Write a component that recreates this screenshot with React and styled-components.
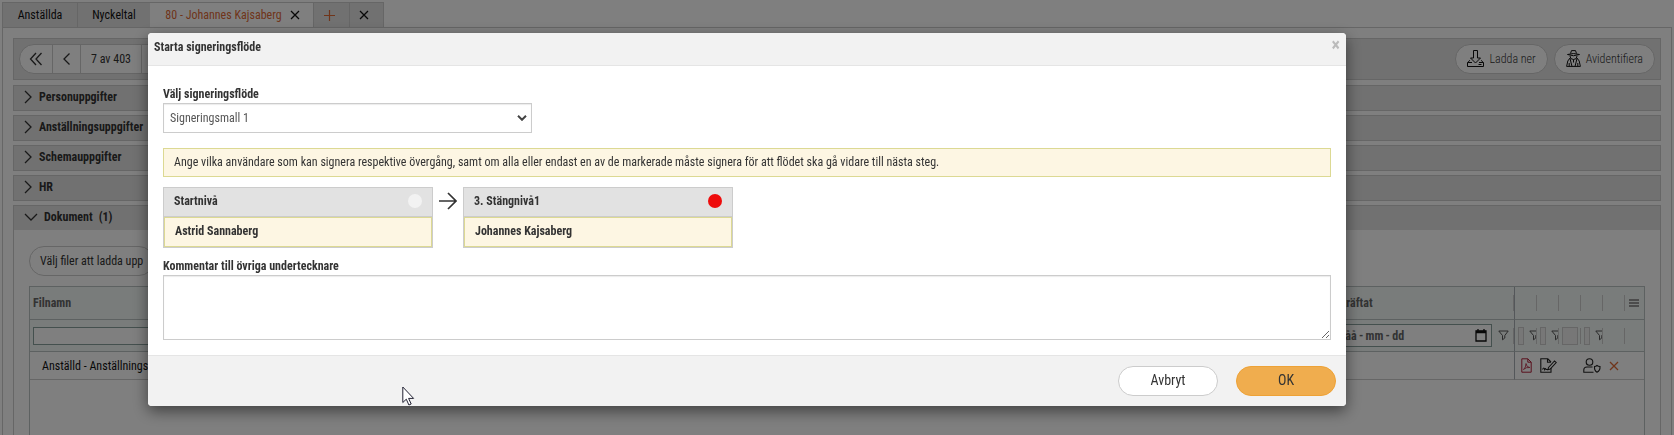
import React, { useState } from "react";
import styled, { createGlobalStyle } from "styled-components";

const colors = {
  text: "#333",
  line: "#ccc",
  bar: "#e3e3e3",
  orange: "#e06a35",
  sand: "#fdf6e3",
  sandLine: "#dcd993",
};

const SECTIONS = ["Personuppgifter", "Anställningsuppgifter", "Schemauppgifter", "HR"];

const LEVELS = [
  { id: 1, title: "Startnivå", user: "Astrid Sannaberg", dot: "#f2f2f2" },
  { id: 2, title: "3. Stängnivå1", user: "Johannes Kajsaberg", dot: "#ee0c0c" },
];

const Chevron = ({ d }) => (
  <svg width="14" height="14" viewBox="0 0 14 14" fill="none" stroke="currentColor" strokeWidth="1.3" aria-hidden="true">
    <path d={d} />
  </svg>
);

const CrossIcon = () => (
  <svg width="10" height="10" viewBox="0 0 10 10" fill="none" stroke="currentColor" strokeWidth="1.3" aria-hidden="true">
    <path d="M1 1l8 8M9 1L1 9" />
  </svg>
);

const PlusIcon = () => (
  <svg width="11" height="11" viewBox="0 0 11 11" fill="none" stroke="currentColor" strokeWidth="1.2" aria-hidden="true">
    <path d="M5.5 0v11M0 5.5h11" />
  </svg>
);

const DownloadIcon = () => (
  <svg width="17" height="17" viewBox="0 0 17 17" fill="none" stroke="#111" aria-hidden="true">
    <path d="M6.5 .5h4V8h3l-5 5-5-5h3z" />
    <path d="M3 10.5H2.5L.5 13v3.500h16V13l-2-2.500H14M.5 12.500H5M12 12.500h4.500M11.500 14.500h3" />
  </svg>
);

const AgentIcon = () => (
  <svg width="15" height="17" viewBox="0 0 15 17" fill="none" stroke="#111" aria-hidden="true">
    <path d="M4.500 3.500L5.500 .6h4l1 2.900M1.500 4.500Q7.500 2.500 13.500 4.500Q7.500 7 1.500 4.500z" />
    <path d="M4 6q0 3.500 3.500 3.500T11 6" />
    <path d="M4 8L1.800 11 .6 16.400h13.800L13.200 11 11 8M4 8.500l2 8M11 8.500l-2 8M7.500 9.500v3M3.200 13v3.400M11.800 13v3.400" />
  </svg>
);

const FunnelIcon = () => (
  <svg width="11" height="11" viewBox="0 0 11 11" fill="none" stroke="#555" strokeWidth="1" aria-hidden="true">
    <path d="M.8 1h9.400L6.800 5.500V8L4.500 9.800V5.500z" />
  </svg>
);

const MenuIcon = () => (
  <svg width="10" height="8" viewBox="0 0 10 8" fill="#999" aria-hidden="true">
    <path d="M0 0h10v2H0zM0 3h10v2H0zM0 6h10v2H0z" />
  </svg>
);

const CalendarIcon = () => (
  <svg width="12" height="13" viewBox="0 0 12 13" fill="none" stroke="#111" aria-hidden="true">
    <path d="M1 2h10v10H1z" strokeWidth="1.300" />
    <path d="M1 3h10" strokeWidth="2.500" />
    <path d="M3 0v2M9 0v2" strokeWidth="1.300" />
  </svg>
);

const PdfIcon = () => (
  <svg width="11" height="15" viewBox="0 0 11 15" fill="none" stroke="#b3203a" aria-hidden="true">
    <path d="M.8 .8h6l3.400 3.400v10H.8zM6.800 .8v3.400h3.400" />
    <path d="M2.500 11.500Q5 9.500 5 5.500Q5.500 9.500 8.800 9.500Q5 9 2.500 11.500z" strokeWidth=".8" />
  </svg>
);

const SignIcon = () => (
  <svg width="17" height="15" viewBox="0 0 17 15" fill="none" stroke="#222" strokeWidth="1.100" aria-hidden="true">
    <path d="M11 10v4.200H.8V.8h7L11 4M7.500 .8v3.500H11" />
    <path d="M8.500 9.500L14.500 3l1.700 1.500-6 6.500-2.200.7zM2.500 11.500q1.500-3 2 0 1-2 1.500 0h2" />
  </svg>
);

const UserIcon = () => (
  <svg width="18" height="15" viewBox="0 0 18 15" fill="none" stroke="#222" strokeWidth="1.100" aria-hidden="true">
    <circle cx="6.500" cy="4" r="3.300" />
    <path d="M10.500 14.200H.8V12q0-3 3.200-3h5.500" />
    <path d="M11.500 8.500q1.500 0 2.500-1 1.200 1 3 1 .3 4.200-3 5.700-2.800-1.500-2.500-5.700z" />
  </svg>
);

const ArrowIcon = () => (
  <svg width="18" height="18" viewBox="0 0 18 18" fill="none" stroke="#333" strokeWidth="1.700" aria-hidden="true">
    <path d="M0 9h17M9 1l8 8-8 8" />
  </svg>
);

const PointerIcon = () => (
  <svg width="13" height="20" viewBox="0 0 13 20" fill="#fff" stroke="#223" aria-hidden="true">
    <path d="M.8 1v15.500l3.500-3.300 2.600 5.800 2.300-1-2.600-5.600h5z" />
  </svg>
);

const App = () => {
  const [comment, setComment] = useState("");

  return (
    <Page>
      <GlobalStyle />
      <Tabs>
        <Tab $width={75}>Anställda</Tab>
        <Tab $width={73}>Nyckeltal</Tab>
        <Tab $width={163} $active>
          80 - Johannes Kajsaberg
          <TabClose><CrossIcon /></TabClose>
        </Tab>
        <Tab $width={36} $accent $icon aria-label="Ny flik"><PlusIcon /></Tab>
        <Tab $width={35} $icon aria-label="Stäng alla"><CrossIcon /></Tab>
      </Tabs>

      <Panel>
        <Toolbar>
          <Pager>
            <PagerButton $width={33} aria-label="Första"><Chevron d="M7 1L1.500 7 7 13M12.500 1L7 7l5.500 6" /></PagerButton>
            <PagerButton $width={28} aria-label="Föregående"><Chevron d="M9.500 1.500L4 7l5.500 5.500" /></PagerButton>
            <PagerText>7 av 403</PagerText>
            <PagerButton $width={28} aria-label="Nästa"><Chevron d="M4.500 1.500L10 7l-5.500 5.500" /></PagerButton>
          </Pager>
          <Actions>
            <PillButton $light><DownloadIcon />Ladda ner</PillButton>
            <PillButton $light><AgentIcon />Avidentifiera</PillButton>
          </Actions>
        </Toolbar>

        {SECTIONS.map((name) => (
          <Section key={name}>
            <SectionHead>
              <Chevron d="M4 1l6 6-6 6" />
              {name}
            </SectionHead>
          </Section>
        ))}
        <Section $open>
          <SectionHead $open>
            <Chevron d="M1 4l6 6 6-6" />
            Dokument <span>(1)</span>
          </SectionHead>
          <SectionBody>
            <PillButton>Välj filer att ladda upp</PillButton>
            <GridBox>
              <Grid>
                <colgroup>
                  <col />
                  <col className="date" />
                  <col className="tool" />
                  <col className="tool" />
                  <col className="tool" />
                  <col className="tool" />
                  <col className="tool" />
                  <col className="menu" />
                </colgroup>
                <thead>
                  <HeadRow>
                    <th>Filnamn</th>
                    <th className="edge"><Tick>Bekräftat</Tick></th>
                    {[1, 2, 3, 4, 5].map((n) => <th key={n}><Tick /></th>)}
                    <th><MenuButton aria-label="Kolumner"><MenuIcon /></MenuButton></th>
                  </HeadRow>
                  <FilterRow>
                    <td><TextFilter aria-label="Filtrera filnamn" /></td>
                    <td className="edge">
                      <Tick>
                        <DateBox>
                          <input aria-label="Filtrera datum" placeholder="åååå&#8201;-&#8201;mm&#8201;-&#8201;dd" />
                          <CalendarIcon />
                        </DateBox>
                        <DateFunnel><FunnelIcon /></DateFunnel>
                      </Tick>
                    </td>
                    <td><Tick><MiniFilter aria-label="Filtrera pdf" /><Clip><FunnelIcon /></Clip></Tick></td>
                    <td><Tick><MiniFilter aria-label="Filtrera signering" /><Clip><FunnelIcon /></Clip></Tick></td>
                    <td><Tick><MiniFilter $wide aria-label="Filtrera status" /></Tick></td>
                    <td><Tick><MiniFilter aria-label="Filtrera användare" /><Clip><FunnelIcon /></Clip></Tick></td>
                    <td><Tick /></td>
                    <td />
                  </FilterRow>
                </thead>
                <tbody>
                  <FileRow>
                    <td>Anställd - Anställningsavtal</td>
                    <td className="edge" />
                    <td><IconButton aria-label="Öppna pdf"><PdfIcon /></IconButton></td>
                    <td><IconButton aria-label="Signera"><SignIcon /></IconButton></td>
                    <td />
                    <td><IconButton aria-label="Behörighet"><UserIcon /></IconButton></td>
                    <td><IconButton $accent aria-label="Ta bort"><CrossIcon /></IconButton></td>
                    <td />
                  </FileRow>
                </tbody>
              </Grid>
            </GridBox>
          </SectionBody>
        </Section>
      </Panel>

      <Overlay>
        <Modal role="dialog" aria-labelledby="modal-title">
          <ModalHead>
            <h2 id="modal-title">Starta signeringsflöde</h2>
            <ModalClose aria-label="Stäng">×</ModalClose>
          </ModalHead>
          <ModalBody>
            <Label htmlFor="flow">Välj signeringsflöde</Label>
            <SelectWrap>
              <Select id="flow">
                <option>Signeringsmall 1</option>
              </Select>
              <svg width="10" height="6" viewBox="0 0 10 6" fill="none" stroke="#444" strokeWidth="2" aria-hidden="true">
                <path d="M1 .8l4 4 4-4" />
              </svg>
            </SelectWrap>
            <Notice>
              Ange vilka användare som kan signera respektive övergång, samt om alla eller endast en av de markerade måste signera för att flödet ska gå vidare till nästa steg.
            </Notice>
            <Levels>
              {LEVELS.map((level, i) => (
                <React.Fragment key={level.id}>
                  {i > 0 && <ArrowIcon />}
                  <Level>
                    <LevelHead>
                      {level.title}
                      <Dot $color={level.dot} />
                    </LevelHead>
                    <LevelUser>{level.user}</LevelUser>
                  </Level>
                </React.Fragment>
              ))}
            </Levels>
            <Label htmlFor="comment">Kommentar till övriga undertecknare</Label>
            <Comment id="comment" value={comment} onChange={(e) => setComment(e.target.value)} />
          </ModalBody>
          <ModalFoot>
            <FootButton>Avbryt</FootButton>
            <FootButton $primary>OK</FootButton>
          </ModalFoot>
          <Pointer><PointerIcon /></Pointer>
        </Modal>
      </Overlay>
    </Page>
  );
};

export default App;

const GlobalStyle = createGlobalStyle`
  * {
    box-sizing: border-box;
  }

  body {
    margin: 0;
    background: #fff;
  }

  body,
  button,
  input,
  select,
  textarea {
    font-family: "Roboto Condensed", Roboto, sans-serif;
    font-size: 12px;
    line-height: 16px;
    color: ${colors.text};
  }

  button {
    padding: 0;
    cursor: pointer;
  }
`;

const Page = styled.div`
  display: flex;
  flex-direction: column;
  height: 100vh;
  padding: 2px 2px 0;
  overflow: hidden;
`;

const Tabs = styled.div`
  display: flex;
  margin-bottom: -1px;
`;

const Tab = styled.button`
  display: flex;
  align-items: center;
  justify-content: center;
  gap: 8px;
  width: ${(props) => props.$width}px;
  height: 26px;
  padding-left: ${(props) => (props.$active ? 2 : 0)}px;
  padding-right: ${(props) => (props.$icon ? 5 : 0)}px;
  border: 1px solid ${colors.line};
  border-left-width: ${(props) => (props.$active ? 0 : 1)}px;
  border-right-width: 0;
  border-bottom-color: ${(props) => (props.$active ? "#fff" : colors.line)};
  background: ${(props) => (props.$active ? "#fff" : colors.bar)};
  color: ${(props) => (props.$active || props.$accent ? colors.orange : "#111")};

  &:last-child {
    border-right-width: 1px;
  }
`;

const TabClose = styled.span`
  display: flex;
  color: #111;
`;

const Panel = styled.main`
  display: flex;
  flex: 1;
  flex-direction: column;
  gap: 4px;
  padding: 10px 10px 0;
  border: 1px solid ${colors.line};
  border-bottom: 0;
`;

const Toolbar = styled.div`
  display: flex;
  align-items: center;
  justify-content: space-between;
  height: 42px;
  margin-bottom: 1px;
  padding: 0 5px 1px;
  border: 1px solid ${colors.line};
  background: ${colors.bar};
`;

const Pager = styled.div`
  display: flex;
  height: 30px;
  border: 1px solid ${colors.line};
  border-radius: 15px;
  background: #fff;
  overflow: hidden;
`;

const PagerButton = styled.button`
  display: flex;
  align-items: center;
  justify-content: center;
  width: ${(props) => props.$width}px;
  border: 0;
  border-right: 1px solid ${colors.line};
  background: none;
`;

const PagerText = styled.span`
  width: 61px;
  padding: 6px 0;
  border-right: 1px solid ${colors.line};
  text-align: center;
`;

const Actions = styled.div`
  display: flex;
  gap: 6px;
`;

const PillButton = styled.button`
  display: flex;
  align-items: center;
  gap: 5px;
  height: 30px;
  padding: 0 ${(props) => (props.$light ? 11 : 10)}px;
  border: 1px solid ${colors.line};
  border-radius: 15px;
  background: #fff;
  font-weight: ${(props) => (props.$light ? 300 : 400)};
`;

const Section = styled.section`
  display: flex;
  flex: ${(props) => (props.$open ? 1 : "none")};
  flex-direction: column;
  border: 1px solid ${colors.line};
  border-bottom-width: ${(props) => (props.$open ? 0 : 1)}px;
`;

const SectionHead = styled.button`
  display: flex;
  align-items: center;
  gap: ${(props) => (props.$open ? 6 : 4)}px;
  height: 24px;
  padding: 0 9px 2px ${(props) => (props.$open ? 10 : 7)}px;
  border: 0;
  background: ${colors.bar};
  font-weight: bold;
`;

const SectionBody = styled.div`
  display: flex;
  flex: 1;
  flex-direction: column;
  align-items: flex-start;
  gap: 10px;
  padding: 16px 15px 0;
`;

const GridBox = styled.div`
  flex: 1;
  width: 100%;
  border: 1px solid #bbc3c3;
  border-bottom: 0;
`;

const Grid = styled.table`
  width: 100%;
  table-layout: fixed;
  border-collapse: separate;
  border-spacing: 0;

  .date {
    width: 190px;
  }

  .tool {
    width: 22px;
  }

  .menu {
    width: 19px;
  }

  th,
  td {
    padding: 0;
    border-bottom: 1px solid #bbc3c3;
    text-align: left;
    white-space: nowrap;
  }

  .edge {
    border-right: 1px solid #a9aeb4;
  }
`;

const HeadRow = styled.tr`
  height: 33px;
  background: #f3f8f7;
  color: #666;

  th:first-child {
    padding-left: 3px;
  }
`;

const FilterRow = styled.tr`
  height: 32px;
  background: #f3f8f7;

  td:first-child {
    padding: 0 3px;
  }
`;

const FileRow = styled.tr`
  height: 28px;
  color: #111;

  td {
    border-bottom-color: ${colors.line};
  }

  td:first-child {
    padding-left: 12px;
  }
`;

const Tick = styled.span`
  display: flex;
  align-items: center;
  justify-content: space-between;
  height: 16px;
  padding-left: 3px;
  border-right: 1px solid ${colors.line};
`;

const Clip = styled.span`
  display: flex;
  width: 7px;
  overflow: hidden;

  svg {
    flex: none;
  }
`;

const TextFilter = styled.input`
  display: block;
  width: 100%;
  height: 18px;
  border: 1px solid #89a09d;
`;

const MiniFilter = styled.input`
  flex: none;
  width: ${(props) => (props.$wide ? 16 : 6)}px;
  height: 18px;
  padding: 0;
  border: 1px solid ${colors.line};
  background: #eee;
`;

const DateBox = styled.label`
  display: flex;
  flex: 1;
  align-items: center;
  min-width: 0;
  height: 23px;
  padding: 0 4px 0 5px;
  border: 1px solid #89a09d;
  background: #fff;

  input {
    flex: 1;
    min-width: 0;
    padding: 0;
    border: 0;
    background: none;
    font-weight: bold;
  }

  input::placeholder {
    color: #666;
  }
`;

const DateFunnel = styled.span`
  display: flex;
  padding: 0 4px 0 6px;
`;

const MenuButton = styled.button`
  display: flex;
  padding-left: 4px;
  border: 0;
  background: none;
`;

const IconButton = styled.button`
  display: flex;
  justify-content: center;
  width: 22px;
  border: 0;
  background: none;
  color: ${(props) => (props.$accent ? colors.orange : "#222")};

  svg {
    flex: none;
  }
`;

const Overlay = styled.div`
  position: fixed;
  inset: 0;
  display: flex;
  align-items: flex-start;
  padding: 33px 328px 0 148px;
  background: rgba(0, 0, 0, 0.5);
`;

const Modal = styled.div`
  position: relative;
  flex: 1;
  border-radius: 4px;
  background: #fff;
  box-shadow: 0 5px 15px rgba(0, 0, 0, 0.5);
  overflow: hidden;
`;

const ModalHead = styled.header`
  display: flex;
  align-items: flex-start;
  justify-content: space-between;
  height: 33px;
  padding: 6px;
  border-bottom: 1px solid #e5e5e5;
  background: #f2f2f2;

  h2 {
    margin: 0;
    font-size: 12px;
    line-height: 16px;
  }
`;

const ModalClose = styled.button`
  border: 0;
  background: none;
  font-size: 18px;
  font-weight: bold;
  line-height: 12px;
  color: #bbb;
`;

const ModalBody = styled.div`
  display: flex;
  flex-direction: column;
  padding: 20px 15px 15px;
`;

const Label = styled.label`
  align-self: flex-start;
  padding-bottom: 1px;
  font-weight: bold;
`;

const SelectWrap = styled.div`
  display: grid;
  align-items: center;
  width: 369px;
  margin-bottom: 15px;

  > * {
    grid-area: 1 / 1;
  }

  > svg {
    justify-self: end;
    margin-right: 5px;
    pointer-events: none;
  }
`;

const Select = styled.select`
  width: 100%;
  height: 30px;
  padding: 0 6px;
  border: 1px solid ${colors.line};
  border-radius: 0;
  background: #fff;
  box-shadow: inset 0 1px 1px rgba(0, 0, 0, 0.08);
  color: #555;
  appearance: none;
`;

const Notice = styled.p`
  margin: 0 0 10px;
  padding: 5px 10px 6px;
  border: 1px solid ${colors.sandLine};
  background: ${colors.sand};
`;

const Levels = styled.div`
  display: flex;
  gap: 6px;
  margin-bottom: 10px;

  > svg {
    margin-top: 5px;
  }
`;

const Level = styled.div`
  width: 270px;
  border: 1px solid ${colors.line};
  font-weight: bold;
`;

const LevelHead = styled.div`
  display: flex;
  align-items: center;
  justify-content: space-between;
  height: 29px;
  padding: 0 10px 2px;
  border-bottom: 1px solid ${colors.line};
  background: #e2e2e2;
`;

const Dot = styled.span`
  width: 14px;
  height: 14px;
  border-radius: 50%;
  background: ${(props) => props.$color};
`;

const LevelUser = styled.div`
  height: 30px;
  padding: 5px 10px;
  border: 1px solid ${colors.sandLine};
  background: ${colors.sand};
`;

const Comment = styled.textarea`
  width: 100%;
  height: 65px;
  border: 1px solid ${colors.line};
  box-shadow: inset 0 1px 1px rgba(0, 0, 0, 0.08);
  resize: vertical;
`;

const ModalFoot = styled.footer`
  display: flex;
  justify-content: flex-end;
  gap: 18px;
  padding: 10px;
  border-top: 1px solid #e5e5e5;
  background: #f2f2f2;
`;

const FootButton = styled.button`
  width: 100px;
  height: 30px;
  padding-bottom: 2px;
  border: 1px solid ${(props) => (props.$primary ? "#eea236" : colors.line)};
  border-radius: 15px;
  background: ${(props) => (props.$primary ? "#f0ad4e" : "#fff")};
  font-size: 14px;
`;

const Pointer = styled.span`
  position: absolute;
  left: 254px;
  bottom: 0;
  display: flex;
  pointer-events: none;
`;
